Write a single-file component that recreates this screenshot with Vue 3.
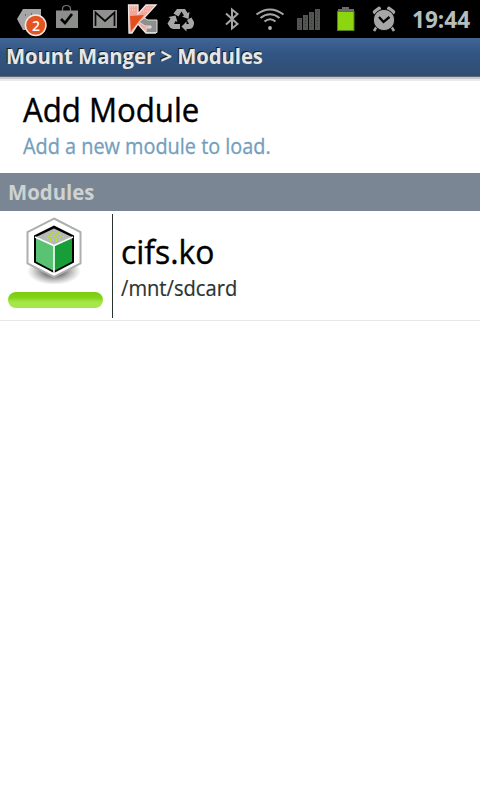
<template>
  <main class="screen">
    <header class="status-bar">
      <div class="notifications">
        <!-- tag with counter -->
        <svg class="icon" viewBox="0 0 38 38">
          <path d="M7 19L13 9H31V30H13Z" fill="#a5a6a5" />
          <path d="M15 15h1M21 14h1M18 18h1" stroke="#333" />
          <circle cx="25.700" cy="25.300" r="11" fill="#f4e9e5" />
          <circle cx="25.700" cy="25.300" r="9.500" fill="#e35420" />
          <text x="26" y="30.800" class="count">{{ unread }}</text>
        </svg>
        <!-- market -->
        <svg class="icon" viewBox="0 0 38 38">
          <path d="M14.500 11V9q0-3.500 4-3.500t4 3.500V11" fill="none" stroke="#777" stroke-width="1.200" />
          <path d="M8 10.500H30V28H8Z" fill="#8c8e8c" />
          <path d="M13 19l4 4 7-9" fill="none" stroke="#000" stroke-width="2.700" />
        </svg>
        <!-- mail -->
        <svg class="icon" viewBox="0 0 38 38">
          <rect x="7" y="10" width="24" height="18" fill="#8f918f" />
          <path d="M9.500 26V12.500l9.500 8.500 9.500-8.500v13.500" fill="none" stroke="#080808" stroke-width="1.700" />
        </svg>
        <!-- antivirus -->
        <svg class="icon" viewBox="0 0 38 38">
          <path d="M4.500 5H14V14L22 5H32L20 18L31 33H22L14 24L8 33H5Z" fill="#f3a69a" stroke="#eee8e6" stroke-width="1.300" />
          <path d="M6 16L20 15L7 31Z" fill="#e3501c" />
          <path d="M6 7h6M6 10h6M22 8h6M19 11h6" stroke="#f8d8d2" stroke-dasharray="1 1" />
          <path d="M15 22L20 18L24 20H33V32.500H22V28H27V26H21Z" fill="#8e908f" stroke="#ddd" stroke-width="1" />
        </svg>
        <!-- recycle -->
        <svg class="icon" viewBox="0 0 38 38" fill="#a5a6a5">
          <path d="M15 9H23L25.500 13L27.500 12L26.500 19L20 16.500L22 15.500L19.500 11.500L16.500 16.500L11.500 13.500Z" />
          <path d="M25 20L29.500 17.500L32 22Q32.500 24 31 27Q30 29 27 29H24.500V31.500L19.500 26.500L24.500 21.500V24H27Z" />
          <path d="M6.500 17L13.500 15.500L15.500 22L13.500 21L12 24H18V29H11Q8.500 29 7 26L5.500 23.500L8.500 18.500Z" />
        </svg>
      </div>
      <div class="system">
        <!-- bluetooth -->
        <svg class="icon" viewBox="0 0 38 38">
          <path d="M13 13.500L24.500 24L19 28.500V9.500L24.500 14L13 24.500" fill="none" stroke="#a5a6a5" stroke-width="2" />
        </svg>
        <!-- wifi -->
        <svg class="icon" viewBox="0 0 38 38" fill="none" stroke="#a5a6a5" stroke-width="2.100">
          <path d="M5.500 14.500Q19 4.500 32.500 14.500M9.500 18Q19 10.500 28.500 18M13.500 21.500Q19 17 24.500 21.500" />
          <circle cx="19" cy="28" r="1.900" fill="#b5b6b5" stroke="none" />
        </svg>
        <!-- signal -->
        <svg class="icon" viewBox="0 0 38 38">
          <path d="M8 18h5v12H8zM14 15h5v15h-5zM20 12h5v18h-5zM26 9h5v21h-5z" fill="#525552" />
          <path d="M10.500 19v10M16.500 17v12M22.500 14v15M28.500 11v18" stroke="#393c39" stroke-dasharray="1 2" />
        </svg>
        <!-- battery -->
        <svg class="icon" viewBox="0 0 38 38">
          <path d="M11 11V9H15V7H22V9H27V11Z" fill="#6b6d6b" />
          <rect x="10.500" y="11.500" width="16.500" height="19" fill="#8cd610" stroke="#567d25" />
        </svg>
        <!-- alarm -->
        <svg class="icon" viewBox="0 0 38 38">
          <path d="M10 12l4-3M24 9l4 3" stroke="#a5a6a5" stroke-width="4.500" stroke-linecap="round" />
          <path d="M12 26l-3 5M26 26l3 5" stroke="#a5a6a5" stroke-width="2.500" />
          <circle cx="19" cy="20" r="10.700" fill="#a5a6a5" stroke="#000" stroke-width="1" />
          <path d="M14 17l4.500 5 6-5" fill="none" stroke="#000" stroke-width="2.300" />
        </svg>
        <time class="clock">19:44</time>
      </div>
    </header>

    <h1 class="title-bar"><span>Mount Manger &gt; Modules</span></h1>

    <section class="add">
      <h2 class="item-title add-title">Add Module</h2>
      <p class="add-hint">Add a new module to load.</p>
    </section>

    <h3 class="section-bar"><span>Modules</span></h3>

    <ul class="modules">
      <li v-for="item in modules" :key="item.name" class="module">
        <div class="module-icon">
          <svg class="cube" viewBox="0 0 60 70">
            <defs>
              <radialGradient id="shade">
                <stop offset="0.3" stop-color="#555" stop-opacity="0.9" />
                <stop offset="1" stop-color="#888" stop-opacity="0" />
              </radialGradient>
            </defs>
            <ellipse cx="30" cy="57" rx="27" ry="14" fill="url(#shade)" />
            <path d="M30 4.500L56.500 18V49.500L30 63L3.500 49.500V18Z" fill="#fff" stroke="#adb0b0" stroke-width="2" />
            <path d="M30 11.500L50 21.500V48.500L30 59L10 48.500V21.500Z" fill="#000" />
            <path d="M30 14.500L48 23L30 31L12 23Z" fill="#b5bab9" />
            <path d="M12 23L30 31V57L12 47.500Z" fill="#5ac373" />
            <path d="M48 23L30 31V57L48 47.500Z" fill="#189e39" />
            <path d="M11 23L30 31.500L49 23M30 31V61" fill="none" stroke="#fff" stroke-width="1.600" />
            <path d="M25 18.500h12M23 20.500h15M21 22.500h19M23 24.500h15M26 26.500h10" stroke="#bfe536" stroke-dasharray="1 2" />
          </svg>
          <div class="loaded"></div>
        </div>
        <div class="module-text">
          <h2 class="item-title module-name">{{ item.name }}</h2>
          <p class="module-path">{{ item.path }}</p>
        </div>
      </li>
    </ul>
  </main>
</template>

<script setup>
import { ref } from 'vue'

const unread = ref(2)

const modules = ref([
  { name: 'cifs.ko', path: '/mnt/sdcard' },
])
</script>

<style>
body {
  background: #fff;
}
</style>

<style scoped>
.screen {
  width: 480px;
  height: 800px;
  overflow: hidden;
  background: #fff;
  font-family: "Open Sans", "Noto Sans", sans-serif;
}

h1, h2, h3, p, ul {
  margin: 0;
  padding: 0;
  white-space: nowrap;
}

.status-bar {
  display: flex;
  justify-content: space-between;
  height: 38px;
  padding: 0 9px 0 10px;
  background: #000;
}

.notifications, .system {
  display: flex;
}

.icon {
  display: block;
  width: 38px;
  height: 38px;
}

.count {
  fill: #fff;
  font-size: 14px;
  font-weight: 600;
  text-anchor: middle;
}

.clock {
  width: 58px;
  margin-left: 9px;
  margin-right: 1px;
  color: #b5bebd;
  font-size: 24px;
  font-weight: 700;
  line-height: 38px;
  transform: scaleX(0.94);
  transform-origin: left;
}

.title-bar {
  box-sizing: border-box;
  height: 39px;
  padding-left: 6px;
  border-bottom: 1px solid #5d6878;
  box-shadow: 0 2px 0 #c6c8c7, 0 4px 0 #e9ebea;
  background: linear-gradient(#426594, #315584 40%, #314d73);
  color: #e7e7e7;
  font-size: 22px;
  font-weight: 700;
  line-height: 35px;
  text-shadow: -1px -1px 0 #182018;
}

/* condensed a little, like the phone's own face */
.title-bar span, .section-bar span, .item-title, .add-hint, .module-path {
  display: inline-block;
  transform-origin: left;
}

.title-bar span {
  transform: scaleX(0.918);
}

.add {
  box-sizing: border-box;
  display: flex;
  flex-direction: column;
  align-items: flex-start;
  height: 96px;
  padding: 14px 0 0 23px;
}

.item-title {
  color: #000;
  font-size: 33px;
  font-weight: 400;
  line-height: 38px;
  -webkit-text-stroke: 0.4px #000;
}

.add-title {
  transform: scaleX(0.945);
}

.add-hint {
  color: #739ebd;
  font-size: 22px;
  line-height: 32px;
  transform: scaleX(0.903);
  -webkit-text-stroke: 0.3px #739ebd;
}

.section-bar {
  height: 38px;
  padding-left: 8px;
  background: #7b8694;
  color: #ced3d1;
  font-size: 22px;
  font-weight: 700;
  line-height: 36px;
}

.section-bar span {
  transform: scaleX(0.925);
}

.modules {
  list-style: none;
}

.module {
  display: flex;
  height: 109px;
  border-bottom: 1px solid #e7e7e7;
}

.module-icon {
  display: flex;
  flex-direction: column;
  align-items: flex-start;
  width: 104px;
  height: 104px;
  margin-top: 3px;
  padding-left: 8px;
  border-right: 1px solid #293431;
}

.cube {
  width: 60px;
  height: 70px;
  margin-left: 16px;
}

.loaded {
  width: 95px;
  height: 16px;
  margin-top: 8px;
  border-radius: 8px;
  background: linear-gradient(#7bcb10, #84d318 35%, #a5e74a 65%);
}

.module-text {
  display: flex;
  flex-direction: column;
  align-items: flex-start;
  padding: 22px 0 0 8px;
}

.module-name {
  transform: scaleX(0.965);
}

.module-path {
  color: #293431;
  font-size: 22px;
  line-height: 33px;
  transform: scaleX(0.915);
  -webkit-text-stroke: 0.2px #293431;
}
</style>
